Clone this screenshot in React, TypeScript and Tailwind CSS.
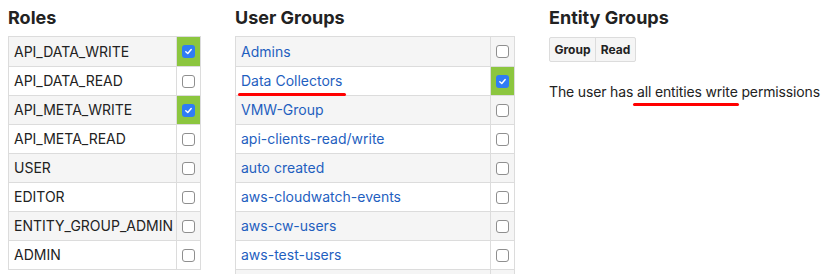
const roles = [
  { name: "API_DATA_WRITE", checked: true },
  { name: "API_DATA_READ", checked: false },
  { name: "API_META_WRITE", checked: true },
  { name: "API_META_READ", checked: false },
  { name: "USER", checked: false },
  { name: "EDITOR", checked: false },
  { name: "ENTITY_GROUP_ADMIN", checked: false },
  { name: "ADMIN", checked: false },
]

const groups = [
  { name: "Admins", checked: false },
  { name: "Data Collectors", checked: true, mark: true },
  { name: "VMW-Group", checked: false },
  { name: "api-clients-read/write", checked: false },
  { name: "auto created", checked: false },
  { name: "aws-cloudwatch-events", checked: false },
  { name: "aws-cw-users", checked: false },
  { name: "aws-test-users", checked: false },
  { name: "", checked: false },
]

function Box({ checked }: { checked: boolean }) {
  if (checked) {
    return (
      <span className="flex h-[13px] w-[13px] items-center justify-center rounded-[3px] bg-[#2f7cf6]">
        <svg width="9" height="9" viewBox="0 0 10 10" fill="none">
          <path d="M2 5.3 L4.2 7.3 L8 2.8" stroke="white" strokeWidth="1.6" strokeLinecap="round" strokeLinejoin="round" />
        </svg>
      </span>
    )
  }
  return <span className="block h-[13px] w-[13px] rounded-[3px] border border-[#8f8f8f] bg-white" />
}

export default function App() {
  return (
    <div className="flex h-[274px] w-[830px] gap-[34px] overflow-hidden bg-white pl-[8px] pt-[6px] text-[14px] text-[#222]" style={{ fontFamily: "Inter, 'Noto Sans', sans-serif" }}>
      <div className="w-[193px] shrink-0">
        <h2 className="h-[30px] text-[18px] font-bold leading-[24px]">Roles</h2>
        <div className="border border-[#dcdcdc]">
          {roles.map((r, i) => (
            <div key={r.name} className={`flex h-[29px] border-[#dcdcdc] ${i > 0 ? "border-t" : ""} ${i % 2 === 0 ? "bg-[#f5f5f5]" : "bg-white"}`}>
              <div className="flex flex-1 items-center pl-[5px] leading-none">{r.name}</div>
              <div className={`flex w-[24px] items-center justify-center border-l border-[#dcdcdc] ${r.checked ? "bg-[#8cc63f]" : ""}`}>
                <Box checked={r.checked} />
              </div>
            </div>
          ))}
        </div>
      </div>

      <div className="w-[280px] shrink-0">
        <h2 className="h-[30px] text-[18px] font-bold leading-[24px]">User Groups</h2>
        <div className="border border-[#dcdcdc]">
          {groups.map((g, i) => (
            <div key={i} className={`flex h-[29px] border-[#dcdcdc] ${i > 0 ? "border-t" : ""} ${i % 2 === 0 ? "bg-[#f5f5f5]" : "bg-white"}`}>
              <div className="relative flex flex-1 items-center pl-[5px] leading-none text-[#1f5fbf]">
                {g.name}
                {g.mark && <span className="absolute left-[2px] top-[26px] h-[3px] w-[108px] rounded-full bg-[#f00]" />}
              </div>
              <div className={`flex w-[24px] items-center justify-center border-l border-[#dcdcdc] ${g.checked ? "bg-[#8cc63f]" : ""}`}>
                {g.name && <Box checked={g.checked} />}
              </div>
            </div>
          ))}
        </div>
      </div>

      <div className="shrink-0">
        <h2 className="h-[31px] text-[18px] font-bold leading-[24px]">Entity Groups</h2>
        <div className="flex w-fit rounded-[2px] border border-[#dcdcdc] bg-[#f5f5f5] text-[12px] font-bold">
          <div className="flex h-[23px] w-[46px] items-center justify-center border-r border-[#dcdcdc]">Group</div>
          <div className="flex h-[23px] w-[39px] items-center justify-center">Read</div>
        </div>
        <p className="relative mt-[22px] leading-[16px] tracking-[-0.15px]">
          The user has all entities write permissions
          <span className="absolute left-[84px] top-[19px] h-[3px] w-[106px] rounded-full bg-[#f00]" />
        </p>
      </div>
    </div>
  )
}
